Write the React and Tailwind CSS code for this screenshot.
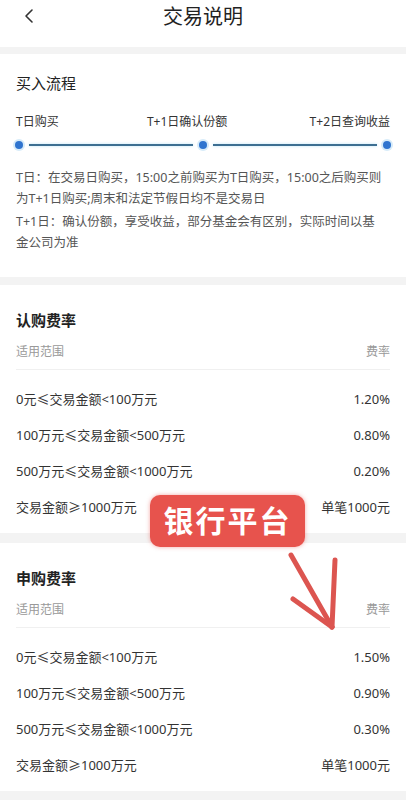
import { ChevronLeft } from "lucide-react";

const subRates = [
  ["0元≤交易金额<100万元", "1.20%"],
  ["100万元≤交易金额<500万元", "0.80%"],
  ["500万元≤交易金额<1000万元", "0.20%"],
  ["交易金额≥1000万元", "单笔1000元"],
];

const buyRates = [
  ["0元≤交易金额<100万元", "1.50%"],
  ["100万元≤交易金额<500万元", "0.90%"],
  ["500万元≤交易金额<1000万元", "0.30%"],
  ["交易金额≥1000万元", "单笔1000元"],
];

function Dot() {
  return (
    <span className="w-[12px] h-[12px] rounded-full bg-[#d6ebf9] flex items-center justify-center shrink-0">
      <span className="w-[8px] h-[8px] rounded-full bg-[#2f74cf]" />
    </span>
  );
}

function RateCard({ title, rows }) {
  return (
    <div className="bg-white px-[16px] pt-[25px] pb-[7px]">
      <div className="text-[15px] leading-[20px] font-semibold text-[#222]">{title}</div>
      <div className="mt-[4px] h-[36px] flex items-center justify-between text-[12px] text-[#999] border-b border-[#f0f0f0]">
        <span>适用范围</span>
        <span>费率</span>
      </div>
      <div className="mt-[12px]">
        {rows.map(([range, rate]) => (
          <div key={range} className="h-[36px] flex items-center justify-between text-[13px] text-[#333]">
            <span>{range}</span>
            <span>{rate}</span>
          </div>
        ))}
      </div>
    </div>
  );
}

export default function App() {
  return (
    <div
      className="relative w-[406px] h-[800px] overflow-hidden bg-[#f3f3f3]"
      style={{ fontFamily: '"Noto Sans", "Noto Sans CJK SC", sans-serif' }}
    >
      {/* header */}
      <div className="h-[47px] bg-white relative flex justify-center">
        <ChevronLeft className="absolute left-[17px] top-[4px] text-[#333]" size={24} strokeWidth={1.6} />
        <div className="text-[20px] leading-[34px] text-[#222]">交易说明</div>
      </div>

      {/* buy flow */}
      <div className="mt-[7px] bg-white h-[223px] px-[16px] pt-[19px]">
        <div className="text-[15px] leading-[20px] text-[#222]">买入流程</div>
        <div className="mt-[21px] flex justify-between text-[12px] leading-[16px] text-[#333]">
          <span>T日购买</span>
          <span className="pl-[6px]">T+1日确认份额</span>
          <span>T+2日查询收益</span>
        </div>
        <div className="mt-[9px] flex items-center -mx-[3px]">
          <Dot />
          <span className="flex-1 mx-[4px] h-[2px] bg-[#3d6f92] shadow-[0_0_3px_#b6e3f7]" />
          <Dot />
          <span className="flex-1 mx-[4px] h-[2px] bg-[#3d6f92] shadow-[0_0_3px_#b6e3f7]" />
          <Dot />
        </div>
        <div className="mt-[16px] pr-[4px] text-[12.5px] leading-[21px] text-[#555]">
          <p>T日：在交易日购买，15:00之前购买为T日购买，15:00之后购买则为T+1日购买;周末和法定节假日均不是交易日</p>
          <p className="mt-[2px]">T+1日：确认份额，享受收益，部分基金会有区别，实际时间以基金公司为准</p>
        </div>
      </div>

      <div className="mt-[8px]">
        <RateCard title="认购费率" rows={subRates} />
      </div>
      <div className="mt-[10px]">
        <RateCard title="申购费率" rows={buyRates} />
      </div>

      {/* annotation overlay */}
      <div className="absolute left-[150px] top-[495px] w-[155px] h-[52px] rounded-[10px] bg-[#e7534d] flex items-center justify-center shadow-[0_0_4px_rgba(231,83,77,0.5)]">
        <span className="text-white text-[30px] font-bold tracking-[2px] leading-none">银行平台</span>
      </div>
      <svg className="absolute left-[280px] top-[548px]" width="70" height="90" viewBox="0 0 70 90">
        <g stroke="#d9433e" strokeWidth="5" strokeLinecap="round" fill="none" opacity="0.9">
          <path d="M11 7 L52 79" />
          <path d="M55 12 L52 79" />
          <path d="M13 51 L52 79" />
        </g>
      </svg>
    </div>
  );
}
